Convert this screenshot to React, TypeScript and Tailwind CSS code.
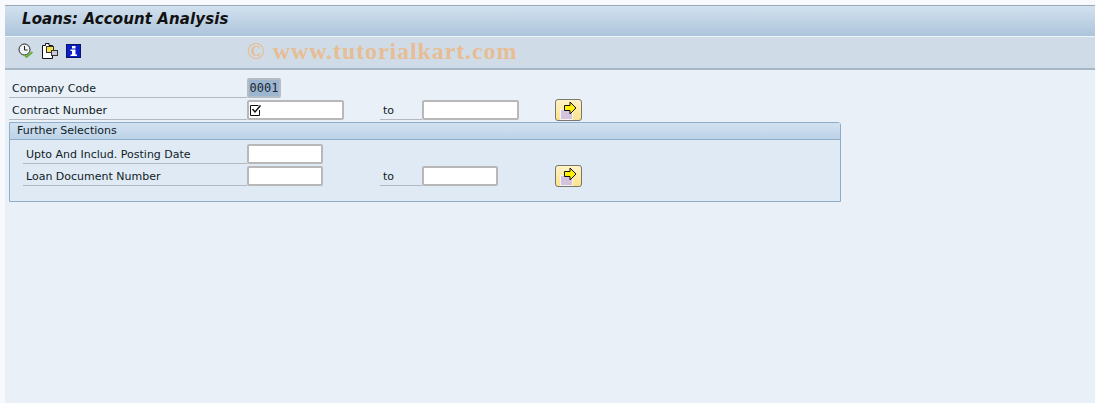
function ClockIcon() {
  return (
    <svg width="16" height="16" viewBox="0 0 16 16" className="shrink-0">
      <circle cx="6.5" cy="6.5" r="5.5" fill="#eef2f4" stroke="#222222" strokeWidth="1" />
      <path d="M6.5 3V7H9.5" fill="none" stroke="#222222" strokeWidth="1" />
      <path d="M6 11.5L8.5 14L14.5 9" fill="none" stroke="#5fae2f" strokeWidth="1.7" />
    </svg>
  );
}

function VariantIcon() {
  return (
    <svg width="16" height="16" viewBox="0 0 16 16" className="shrink-0">
      <path d="M0.5 2.5H3.5V0.5H7V2.5H10.5V15.5H0.5Z" fill="#ffffff" stroke="#111111" strokeWidth="1" />
      <rect x="4.5" y="3.5" width="7" height="6" fill="#f7e14a" stroke="#333333" strokeWidth="1" />
      <rect x="9.5" y="7.5" width="6" height="5" fill="#c9ced6" stroke="#333333" strokeWidth="1" />
    </svg>
  );
}

function InfoIcon() {
  return (
    <svg width="15" height="14" viewBox="0 0 15 14" className="shrink-0">
      <rect x="0" y="0" width="15" height="14" fill="#0a1fc4" />
      <rect x="0.5" y="0.5" width="14" height="13" fill="none" stroke="#0b1266" />
      <rect x="6" y="2" width="3.5" height="2.5" fill="#ffffff" />
      <path d="M4.5 5.5H9.5V10.5H11V12H4.5V10.5H6V7H4.5Z" fill="#ffffff" />
    </svg>
  );
}

function CheckIcon() {
  return (
    <svg width="13" height="13" viewBox="0 0 13 13" className="shrink-0">
      <path d="M9.5 1.5H1.5V11.5H10.5V6" fill="none" stroke="#111111" strokeWidth="1" />
      <path d="M3.5 5L6 8L11.5 1.5" fill="none" stroke="#111111" strokeWidth="1.4" />
    </svg>
  );
}

function MultiButton() {
  return (
    <button
      type="button"
      className="relative h-[22px] w-[27px] shrink-0 rounded-[3px] border border-[#77766f] bg-gradient-to-b from-[#fff3c4] to-[#fde28c]"
    >
      <svg width="19" height="19" viewBox="0 0 19 19" className="absolute left-[4px] top-[1px]">
        <rect x="0.5" y="8.5" width="12" height="10" fill="#d4c3de" stroke="#f6f4ee" strokeWidth="1" />
        <path d="M4.5 4.5H10V1L16 7L10 13V9.5H4.5Z" fill="#fdf006" stroke="#111111" strokeWidth="1" />
      </svg>
    </button>
  );
}

function Field({ width, children }: { width: string; children?: React.ReactNode }) {
  return (
    <div
      className={`${width} mt-[1px] flex h-[20px] shrink-0 items-center rounded-[2px] border-2 border-[#b8b8b8] bg-white`}
    >
      {children}
    </div>
  );
}

function Label({ width, text }: { width: string; text: string }) {
  return (
    <div className={`${width} h-[21px] shrink-0 border-b border-[#b3b9bf] pl-[3px] pt-[4px] text-[11px] leading-[15px] text-[#111c26]`}>
      {text}
    </div>
  );
}

export default function App() {
  return (
    <div className="h-[403px] w-[1095px] overflow-hidden bg-[#f7f9fc] pl-[5px] pt-[5px] font-['DejaVu_Sans',sans-serif]">
      <div className="flex h-[398px] flex-col bg-[#e9f0f7]">
        <div className="h-[31px] shrink-0 border-t border-[#9aa7b5] bg-gradient-to-b from-[#d2e1ee] to-[#adc4dc] pl-[17px] pt-[4px] text-[15px] font-bold italic leading-[19px] tracking-[0.1px] text-[#111111]">
          Loans: Account Analysis
        </div>
        <div className="flex h-[34px] shrink-0 items-center border-t border-[#eef3f8] border-b-2 border-b-[#a9b6c4] bg-[#cfdce7] pl-[13px]">
          <div className="mb-[4px] flex w-[229px] shrink-0 items-center gap-[8px]">
            <ClockIcon />
            <VariantIcon />
            <InfoIcon />
          </div>
          <span className="mb-[3px] whitespace-nowrap text-[24px] font-bold leading-none tracking-[0.9px] text-[#e7bd94] font-['Liberation_Serif',serif]">
            © www.tutorialkart.com
          </span>
        </div>

        <div className="pl-[4px] pt-[7px]">
          <div className="flex h-[22px] items-start">
            <Label width="w-[238px]" text="Company Code" />
            <div className="mt-[1px] flex h-[20px] w-[34px] shrink-0 items-center justify-center rounded-[2px] border-2 border-[#b4bcc4] bg-[#9db6d0] text-[12px] text-[#1b2733] font-['DejaVu_Sans_Mono',monospace]">
              0001
            </div>
          </div>
          <div className="flex h-[22px] items-start">
            <Label width="w-[238px]" text="Contract Number" />
            <Field width="w-[97px]">
              <CheckIcon />
            </Field>
            <div className="w-[36px] shrink-0" />
            <Label width="w-[42px]" text="to" />
            <Field width="w-[97px]" />
            <div className="w-[36px] shrink-0" />
            <MultiButton />
          </div>

          <div className="mt-[1px] h-[80px] w-[832px] rounded-tr-[3px] border border-[#8fadcb] bg-[#dfeaf4]">
            <div className="h-[17px] border-b border-[#8fadcb] bg-gradient-to-b from-[#d3e2f0] to-[#bcd2e8] pl-[7px] text-[11px] leading-[15px] text-[#111c26]">
              Further Selections
            </div>
            <div className="pl-[13px] pt-[3px]">
              <div className="flex h-[22px] items-start">
                <Label width="w-[224px]" text="Upto And Includ. Posting Date" />
                <Field width="w-[76px]" />
              </div>
              <div className="flex h-[22px] items-start">
                <Label width="w-[224px]" text="Loan Document Number" />
                <Field width="w-[76px]" />
                <div className="w-[57px] shrink-0" />
                <Label width="w-[42px]" text="to" />
                <Field width="w-[76px]" />
                <div className="w-[57px] shrink-0" />
                <MultiButton />
              </div>
            </div>
          </div>
        </div>
      </div>
    </div>
  );
}
